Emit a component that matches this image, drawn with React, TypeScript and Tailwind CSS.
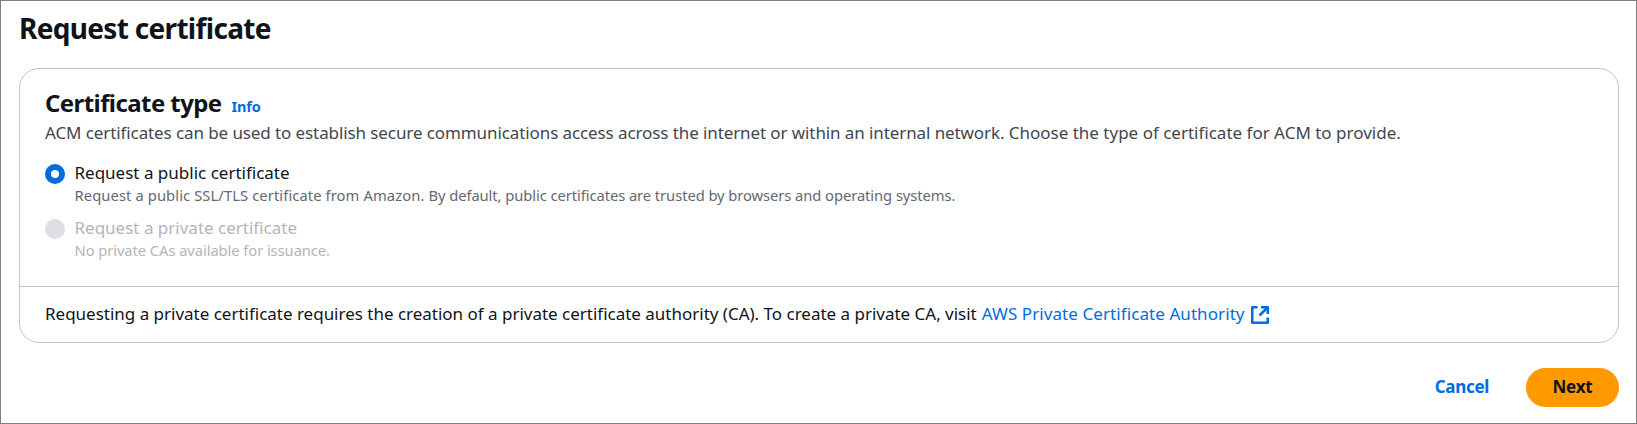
import type { ReactNode } from "react";

type OptionProps = {
  label: string;
  description: ReactNode;
  checked?: boolean;
  disabled?: boolean;
};

function RadioOption({ label, description, checked, disabled }: OptionProps) {
  return (
    <label className="flex gap-[9px]">
      <span
        className={
          "mt-1 flex size-5 shrink-0 items-center justify-center rounded-full " +
          (checked ? "bg-[#006ce0]" : "bg-[#dedee3]")
        }
      >
        {checked && <span className="size-2 rounded-full bg-white" />}
      </span>
      <span className="flex flex-col pl-[0.5px]">
        <span
          className={
            "text-[17px] leading-[25px] " +
            (disabled ? "text-[#b4b4bb]" : "text-[#0f141a]")
          }
        >
          {label}
        </span>
        <span
          className={
            "text-[14.75px] leading-5 " +
            (disabled ? "tracking-[-0.08px] text-[#b4b4bb]" : "text-[#656871]")
          }
        >
          {description}
        </span>
      </span>
    </label>
  );
}

function ExternalIcon() {
  return (
    <svg
      viewBox="0 0 18 18"
      className="size-[18px]"
      fill="none"
      stroke="currentColor"
      strokeWidth="2.5"
      strokeLinejoin="round"
    >
      <path d="M6.5 1.25H1.25V16.75H16.75V11.5" />
      <path d="M10 1.25H16.75V8" />
      <path d="M16.5 1.5L8.5 9.5" />
    </svg>
  );
}

export default function App() {
  return (
    <div className="flex h-[424px] w-[1637px] flex-col overflow-hidden whitespace-nowrap border border-[#7f7f7f] bg-white pl-[18px] pr-[17px] pt-[9px] font-['Noto_Sans',sans-serif]">
      <h1 className="text-[28px] font-bold leading-9 tracking-[-0.68px] text-[#0f141a]">
        Request certificate
      </h1>

      <section className="mt-[22px] rounded-[20px] border border-[#c1c4ca]">
        <div className="px-[25px] pb-[26px] pt-[19px]">
          <div className="flex items-baseline gap-2.5">
            <h2 className="text-[24px] font-bold leading-[30px] tracking-[-0.58px] text-[#0f141a]">
              Certificate type
            </h2>
            <a className="text-[14.5px] font-bold leading-5 tracking-[-0.2px] text-[#006ce0]">
              Info
            </a>
          </div>
          <p className="mt-0.5 text-[17px] leading-[25px] text-[#424650]">
            <span className="tracking-[-0.096px]">
              ACM certificates can be used to establish secure communications access across the
              internet or within an internal network.{" "}
            </span>
            <span>Choose the type of certificate for ACM to provide.</span>
          </p>
          <div className="mt-[15px] flex flex-col gap-2.5">
            <RadioOption
              checked
              label="Request a public certificate"
              description={
                <>
                  <span className="tracking-[0.09px]">
                    Request a public SSL/TLS certificate from Amazon.{" "}
                  </span>
                  <span className="tracking-[-0.075px]">
                    By default, public certificates are trusted by browsers and operating systems.
                  </span>
                </>
              }
            />
            <RadioOption
              disabled
              label="Request a private certificate"
              description="No private CAs available for issuance."
            />
          </div>
        </div>
        <div className="flex border-t border-[#c1c4ca] px-[25px] pb-4 pt-3.5 text-[17px] leading-[25px] text-[#0f141a]">
          <p className="tracking-[-0.01px]">
            Requesting a private certificate requires the creation of a private certificate
            authority (CA). To create a private CA, visit
          </p>
          <a className="ml-[5px] flex items-start gap-1.5 tracking-[0.08px] text-[#006ce0]">
            AWS Private Certificate Authority
            <span className="pt-[5px]">
              <ExternalIcon />
            </span>
          </a>
        </div>
      </section>

      <footer className="mt-[25px] flex justify-end text-[17px] font-bold leading-[37px]">
        <button className="mr-[37px] h-[39px] pb-0.5 tracking-[-0.3px] text-[#006ce0]">
          Cancel
        </button>
        <button className="h-[39px] w-[93px] rounded-full bg-[#ff9900] pb-0.5 tracking-[-0.2px] text-[#0f141a]">
          Next
        </button>
      </footer>
    </div>
  );
}
